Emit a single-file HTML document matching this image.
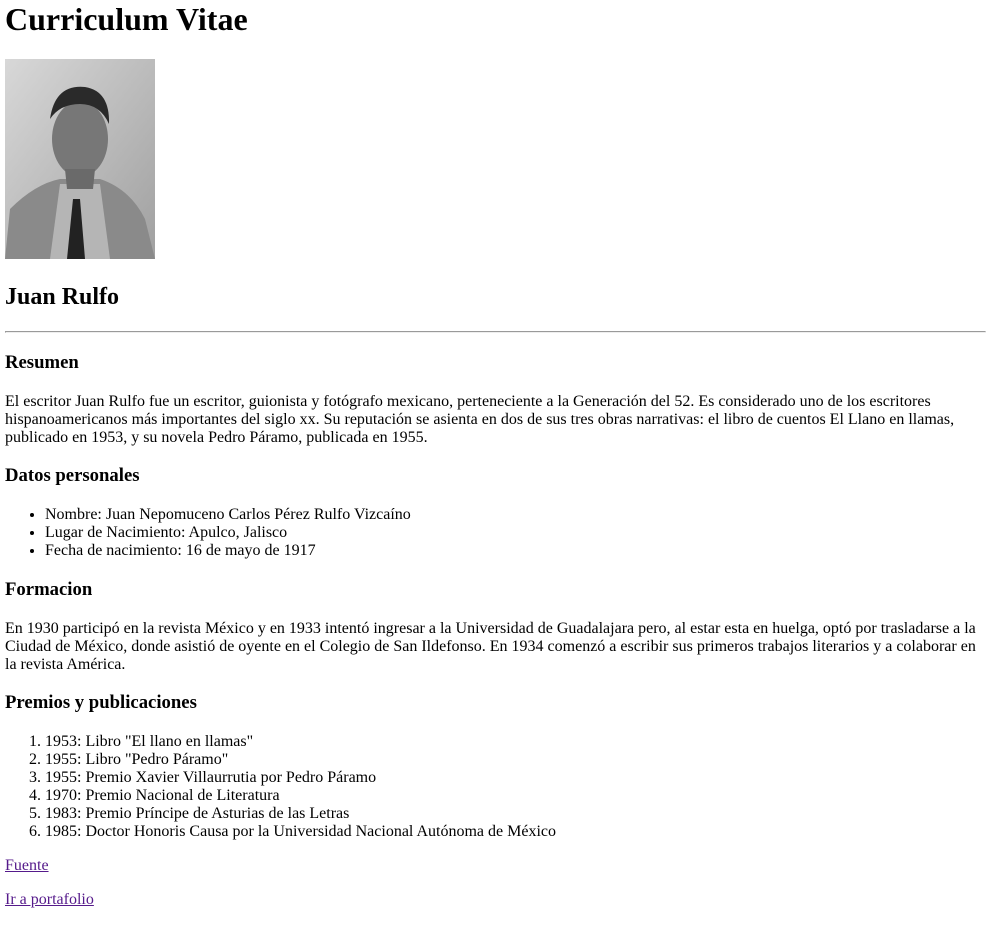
<!DOCTYPE html>
<html><head><meta charset="utf-8">
<style>
body{margin:0 0 0 5px;padding-top:1px;font-family:"Liberation Serif",serif;font-size:16px;color:#000;background:#fff;}
h1{margin-top:0;font-size:32px;}
a{color:#551a8b;}
</style></head><body>
<h1>Curriculum Vitae</h1>
<svg width="150" height="200" viewBox="0 0 150 200" style="display:inline-block;vertical-align:baseline">
<defs><linearGradient id="bg" x1="0" y1="0" x2="1" y2="1"><stop offset="0" stop-color="#d8d8d8"/><stop offset="1" stop-color="#a0a0a0"/></linearGradient></defs>
<rect width="150" height="200" fill="url(#bg)"/>
<path d="M0 200 L5 150 Q30 125 55 120 L95 120 Q125 130 140 160 L150 200Z" fill="#8a8a8a"/>
<path d="M45 200 L55 125 L95 125 L105 200Z" fill="#b5b5b5"/>
<path d="M68 140 L62 200 L80 200 L75 140Z" fill="#222"/>
<ellipse cx="75" cy="80" rx="28" ry="38" fill="#777"/>
<path d="M45 60 Q50 25 80 28 Q105 32 104 65 Q95 45 75 45 Q55 45 45 60Z" fill="#2a2a2a"/>
<path d="M60 110 L90 110 L88 130 L62 130Z" fill="#6a6a6a"/>
</svg>
<h2>Juan Rulfo</h2>
<hr>
<h3>Resumen</h3>
<p>El escritor Juan Rulfo fue un escritor, guionista y fotógrafo mexicano, perteneciente a la Generación del 52. Es considerado uno de los escritores hispanoamericanos más importantes del siglo xx. Su reputación se asienta en dos de sus tres obras narrativas: el libro de cuentos El Llano en llamas, publicado en 1953, y su novela Pedro Páramo, publicada en 1955.</p>
<h3>Datos personales</h3>
<ul>
<li>Nombre: Juan Nepomuceno Carlos Pérez Rulfo Vizcaíno</li>
<li>Lugar de Nacimiento: Apulco, Jalisco</li>
<li>Fecha de nacimiento: 16 de mayo de 1917</li>
</ul>
<h3>Formacion</h3>
<p>En 1930 participó en la revista México y en 1933 intentó ingresar a la Universidad de Guadalajara pero, al estar esta en huelga, optó por trasladarse a la Ciudad de México, donde asistió de oyente en el Colegio de San Ildefonso. En 1934 comenzó a escribir sus primeros trabajos literarios y a colaborar en la revista América.</p>
<h3>Premios y publicaciones</h3>
<ol>
<li>1953: Libro "El llano en llamas"</li>
<li>1955: Libro "Pedro Páramo"</li>
<li>1955: Premio Xavier Villaurrutia por Pedro Páramo</li>
<li>1970: Premio Nacional de Literatura</li>
<li>1983: Premio Príncipe de Asturias de las Letras</li>
<li>1985: Doctor Honoris Causa por la Universidad Nacional Autónoma de México</li>
</ol>
<p><a href="#">Fuente</a></p>
<p><a href="#">Ir a portafolio</a></p>
</body></html>
